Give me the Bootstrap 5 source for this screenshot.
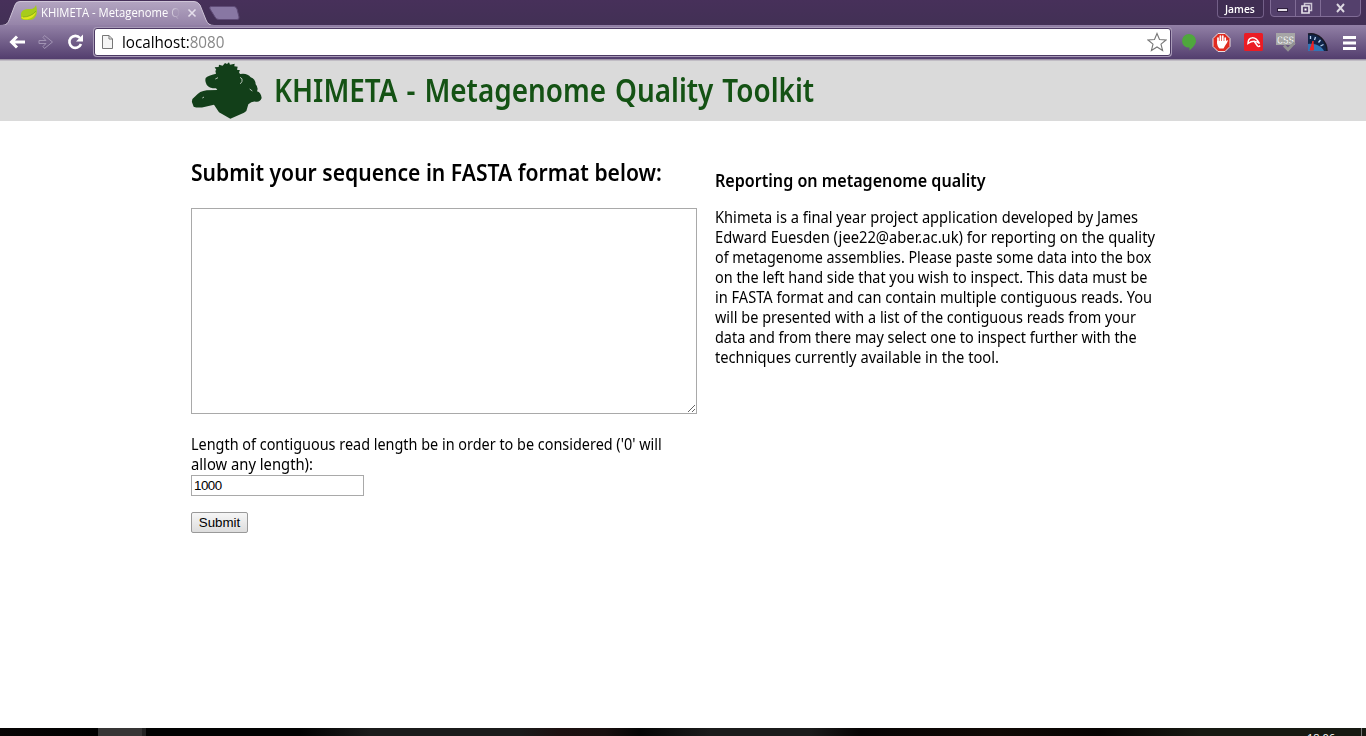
<!DOCTYPE html>
<html lang="en">
<head>
<meta charset="utf-8">
<title>KHIMETA - Metagenome Quality Toolkit</title>
<link rel="stylesheet" href="https://cdn.jsdelivr.net/npm/bootstrap@5.3.0/dist/css/bootstrap.min.css">
<style>
body{font-family:"Noto Sans","Open Sans",sans-serif;font-size:15.5px;line-height:20px;color:#000;background:#fff;height:736px;overflow:hidden}
svg{display:block;flex:none}
.fit{display:block;width:max-content;white-space:nowrap;transform-origin:0 50%}
.titlebar{height:25px;background:linear-gradient(#47305a,#423055);flex:none}
.tabshape{width:214px;height:25px}
.newtab{margin-left:-6px}
.tabtitle{left:41px;top:3px;width:139px;height:20px;overflow:hidden;font:12px/20px "Open Sans",sans-serif;color:#fff;-webkit-mask-image:linear-gradient(90deg,#000 124px,transparent 139px)}
.userbtn{width:47px;height:18px;border:1px solid #735f88;border-top:0;border-radius:0 0 4px 4px;background:#3f2d52;color:#fff;font:600 11px/17px "Open Sans",sans-serif;margin-right:5px}
.toolbar{height:35px;background:linear-gradient(#9280a6,#75628c 45%,#533e6e);border-bottom:1px solid #9c92a5;flex:none;padding-left:8px}
.urlbox{width:1077px;height:28px;background:#fff;border:1px solid #4c3963;border-radius:3px;box-shadow:0 0 0 1px #a99bb8;font:15.5px/26px "Open Sans",sans-serif;margin:0 0 1px 10px;padding:0 3px 0 6px}
.port{color:#888}
.masthead{height:61px;background:#dadada;border-top:1px solid #c0bcc4;padding-left:190px;flex:none}
.masthead h1{font-size:32px;line-height:40px;font-weight:650;color:#145214;margin:-3px 0 0 11px;word-spacing:2px}
.leftcol{width:506px;margin-left:191px}
.rightcol{width:450px;margin-left:18px;padding-top:48px}
h2{font-size:23.5px;line-height:30px;font-weight:650;margin:36px 0 21px}
h3{font-size:18px;line-height:22px;font-weight:650;margin:0 0 16px}
.seq{display:block;width:506px;height:206px;border:1px solid #a9a9a9;margin-bottom:20px;outline:0}
.len{display:block;width:173px;height:21px;border:1px solid #a9a9a9;padding:0 2px;margin-top:1px;font:13.33px/19px "Liberation Sans",sans-serif;letter-spacing:-.5px}
.send{display:block;width:57px;height:21px;margin-top:16px;padding:0;border:1px solid #999;border-radius:2px;background:linear-gradient(#f6f6f6,#ddd);font:13.33px/18px "Liberation Sans",sans-serif;color:#000}
.taskbar{height:8px;flex:none;overflow:hidden;background:linear-gradient(90deg,#080505 0,#000 98px,#363535 98px,#363535 142px,#222 142px,#222 146px,#020202 146px,#020202 300px,#1b1b1b 370px,#1b1b1b 520px,#1c1010 560px,#190f0f 605px,#050505 640px,#1b1b1b 710px,#1b1b1b 810px,#070404 860px,#100905 1000px,#070302 1100px,#171912 1200px,#171912)}
.clock{color:#fff;font:11px/14px "Open Sans",sans-serif;margin:3px 26px 0 0}
.peek{width:5px;border-left:1px solid #777}
</style>
</head>
<body class="d-flex flex-column">
<header class="titlebar d-flex">
  <div class="tabshape position-relative">
    <svg width="214" height="25"><defs><linearGradient id="tg" x2="0" y2="1"><stop stop-color="#b3a5c1"/><stop offset="1" stop-color="#9583a8"/></linearGradient></defs>
      <path d="M0 25.500C7 25.500 8 23 10 18L15 5Q16 1.500 20 1.500H194Q198 1.500 200 5L206 20Q208 25.500 214 25.500Z" fill="url(#tg)" stroke="#cec4d7"/>
      <path d="M21.500 18C19 10 25 9 30 9C34 9 35 7 36 5C38 12 37 20 29 20C26 20 24 20 21 19Z" fill="#a7cc1b"/><path d="M21 17C27 17 32 16 36 12C34 18 29 20 23 19Z" fill="#e1e61c"/><path d="M23 17Q31 17 36 11" stroke="#729c16" stroke-width=".6" fill="none"/>
      <path d="M188.500 9.500l7 7m0-7l-7 7" stroke="#e5deeb" stroke-width="1.600"/></svg>
    <div class="tabtitle position-absolute"><span class="fit" data-w="139">KHIMETA - Metagenome Q</span></div>
  </div>
  <svg class="newtab" width="32" height="25"><path d="M3 6.500H26Q28 6.500 29 9L31 17Q31.500 19.500 29 19.500H11Q8 19.500 7 17L2 9Q1 6.500 3 6.500Z" fill="#8877a3" stroke="#5f4b77"/></svg>
  <div class="userbtn ms-auto d-flex justify-content-center"><span class="fit" data-w="30">James</span></div>
  <svg width="97" height="25"><path d="M1.500 0V13Q1.500 16.500 5 16.500H88Q91.500 16.500 91.500 13V0" fill="#54406c" stroke="#806c96"/><path d="M26.500 0V16M51.500 0V16" stroke="#806c96"/><rect x="8.500" y="8.500" width="10" height="3" fill="#e4dfe8" stroke="#30203f"/><path d="M35.500 3.500h7v7h-7z" fill="none" stroke="#ccc4d4" stroke-width="1.500"/><path d="M33 6h7v7h-7z" fill="#54406c" stroke="#e4dfe8" stroke-width="1.700"/><rect x="35.500" y="8.500" width="2" height="2" fill="#fff"/><path d="M68 4l7 8m0-8l-7 8" stroke="#ddd8e2" stroke-width="1.900"/></svg>
</header>
<nav class="toolbar d-flex align-items-center">
  <svg width="76" height="28" fill="none" stroke="#fff" stroke-width="3"><path d="M17 14H3M9 8.500L3.500 14L9 19.500"/><path d="M31 12.500h7l-3-3l1.500-2l8 6.500l-8 6.500l-1.500-2l3-3h-7z" stroke="#a294b4" stroke-width="1"/><path d="M72 10A6 6 0 1 0 73 16" stroke-width="2.600"/><path d="M75 6.500v7h-7z" fill="#fff" stroke="none"/></svg>
  <div class="urlbox d-flex align-items-center">
    <svg width="13" height="16"><path d="M1.500 1.500H8L11.500 5V14.500H1.500ZM8 1.500V5H11.500" fill="#f5f5f5" stroke="#777"/></svg>
    <span class="fit ms-1 ps-1" data-w="106">localhost:<span class="port">8080</span></span>
    <svg width="20" height="20" class="ms-auto"><path d="M10 1.500L12.500 7.500L19 8L14 12.200L15.600 18.500L10 15L4.400 18.500L6 12.200L1 8L7.500 7.500Z" fill="#fff" stroke="#777" stroke-width="1.100"/></svg>
  </div>
  <svg width="190" height="28"><g transform="translate(-1171 -28)">
    <path d="M1189 34a7 7 0 0 1 7 7c0 4-4 7-6.500 9.500v-3a6.700 6.700 0 0 1-7.500-6.500a7 7 0 0 1 7-7Z" fill="#4fa73d"/>
    <path d="M1218 33.500h7l5 5v8l-5 5h-7l-5-5v-8z" fill="#e02b20" stroke="#e9dde2"/><path d="M1218 43v-5m2.400 5v-7m2.400 7v-7m2.400 7v-5" stroke="#fff" stroke-width="1.700" stroke-linecap="round"/><path d="M1217 41h9l1.500-1q1 1-2 5l-2 3.500h-4q-2.500-2-2.500-7.500Z" fill="#fff"/>
    <rect x="1244" y="33" width="19" height="18" rx="1.500" fill="#eb1c24"/><path d="M1248 43.500C1248 37 1255 35 1259.500 43.500C1256 40.500 1252 40.500 1248 43.500Z" fill="none" stroke="#fff" stroke-width="1.500"/><path d="M1254 41l3.500 5q1.500 1 2.500-.5" fill="none" stroke="#fff" stroke-width="1.500"/>
    <path d="M1276 33h19v12h-19z" fill="#a6a6a6"/><text x="1277" y="43.500" font-family="Liberation Sans,sans-serif" font-size="10" font-weight="700" fill="#fff" stroke="#777" stroke-width=".3" textLength="17" lengthAdjust="spacingAndGlyphs">CSS</text><path d="M1284 45.500l4 4l6.500-7" stroke="#929292" stroke-width="3" fill="none"/>
    <path d="M1308 51V34C1318 32 1327 41 1327 51Z" fill="#10254a"/><path d="M1308 51V44C1316 43 1322 47 1324 51Z" fill="#3275b5"/><path d="M1308 34C1318 32 1327 41 1327 51" fill="none" stroke="#1a1824" stroke-width="1.500"/><path d="M1310 50l3-9l.5 9z" fill="#e22" stroke="#e22"/><path d="M1310.500 36v3m5-2l-1 3m6 0l-2 2.500m5 2l-3 1.500" stroke="#b5cff0" stroke-width="1.300"/>
    <path d="M1343 36h13v3h-13zM1343 41.500h13v3h-13zM1343 47h13v3h-13z" fill="#fff"/>
  </g></svg>
</nav>
<section class="masthead d-flex align-items-center">
  <svg width="73" height="58" viewBox="6 11 219 174"><path d="M12 132Q10 122 22 114Q35 98 56 96L88 95L84 90Q62 90 56 79Q50 70 53 59Q60 51 84 46L82 37L85 35L80 27L92 26L93 19L104 22L111 14L117 17L123 12L126 19L140 16L139 24L149 25L147 34L156 36L153 42L156 47Q178 43 188 57Q202 61 203 78Q212 88 207 99Q219 102 221 119Q216 132 204 130Q192 127 181 138L175 158L168 163L127 181L93 162L85 150L78 139L52 145Q31 150 17 145Z" fill="#123f19"/><path d="M82 62l8-4M43 119l5-3M185 92l8 6M156 57q9 3 6 12q-1 5-6 7" fill="none" stroke="#b7c4b8" stroke-width="3"/></svg>
  <h1><span class="fit" data-w="540">KHIMETA - Metagenome Quality Toolkit</span></h1>
</section>
<main class="flex-grow-1 d-flex align-items-start">
  <form class="leftcol" onsubmit="return false">
    <h2><span class="fit" data-w="470.500">Submit your sequence in FASTA format below:</span></h2>
    <textarea class="seq"></textarea>
    <label class="d-block"><span class="fit" data-w="470.500">Length of contiguous read length be in order to be considered ('0' will</span><span class="fit" data-w="122">allow any length):</span></label>
    <input class="len" value="1000">
    <button class="send">Submit</button>
  </form>
  <aside class="rightcol">
    <h3><span class="fit" data-w="271">Reporting on metagenome quality</span></h3>
    <p class="m-0"><span class="fit" data-w="423">Khimeta is a final year project application developed by James</span>
    <span class="fit" data-w="439.500">Edward Euesden (jee22@aber.ac.uk) for reporting on the quality</span>
    <span class="fit" data-w="436">of metagenome assemblies. Please paste some data into the box</span>
    <span class="fit" data-w="432">on the left hand side that you wish to inspect. This data must be</span>
    <span class="fit" data-w="437">in FASTA format and can contain multiple contiguous reads. You</span>
    <span class="fit" data-w="421">will be presented with a list of the contiguous reads from your</span>
    <span class="fit" data-w="422">data and from there may select one to inspect further with the</span>
    <span class="fit" data-w="284">techniques currently available in the tool.</span></p>
  </aside>
</main>
<footer class="taskbar d-flex justify-content-end"><span class="clock">18:06</span><span class="peek"></span></footer>
<script src="https://cdn.jsdelivr.net/npm/bootstrap@5.3.0/dist/js/bootstrap.bundle.min.js"></script>
<script>
document.querySelectorAll('.fit').forEach(function(e){
  e.style.transform='scaleX('+(e.dataset.w/e.offsetWidth)+')';
});
</script>
</body>
</html>
